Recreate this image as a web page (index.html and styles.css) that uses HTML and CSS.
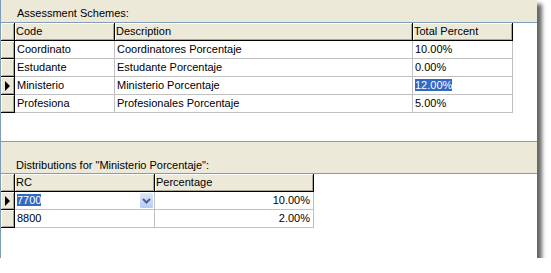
FILE: index.html
```html
<!DOCTYPE html>
<html lang="en">
<head>
  <meta charset="UTF-8">
  <meta name="viewport" content="width=device-width, initial-scale=1.0">
  <title>Assessment Schemes</title>
  <link rel="stylesheet" href="styles.css">
</head>
<body>
  <div class="window">
    <div class="band first"><span>Assessment Schemes:</span></div>
    <div class="grid-area schemes">
      <table class="grid">
        <colgroup>
          <col class="c-sel">
          <col class="c-code">
          <col class="c-desc">
          <col class="c-total">
        </colgroup>
        <tr>
          <th class="sel"></th>
          <th>Code</th>
          <th>Description</th>
          <th>Total Percent</th>
        </tr>
        <tr>
          <td class="sel"></td>
          <td>Coordinato</td>
          <td>Coordinatores Porcentaje</td>
          <td>10.00%</td>
        </tr>
        <tr>
          <td class="sel"></td>
          <td>Estudante</td>
          <td>Estudante Porcentaje</td>
          <td>0.00%</td>
        </tr>
        <tr>
          <td class="sel current"><span class="arrow"></span></td>
          <td>Ministerio</td>
          <td>Ministerio Porcentaje</td>
          <td><span class="picked">12.00%</span></td>
        </tr>
        <tr>
          <td class="sel"></td>
          <td>Profesiona</td>
          <td>Profesionales Porcentaje</td>
          <td>5.00%</td>
        </tr>
      </table>
    </div>
    <div class="band second"><span>Distributions for "Ministerio Porcentaje":</span></div>
    <div class="grid-area dists">
      <table class="grid">
        <colgroup>
          <col class="c-sel">
          <col class="c-rc">
          <col class="c-pct">
        </colgroup>
        <tr>
          <th class="sel"></th>
          <th>RC</th>
          <th>Percentage</th>
        </tr>
        <tr>
          <td class="sel current"><span class="arrow"></span></td>
          <td class="combo">
            <span class="picked">7700</span>
            <span class="drop">
              <svg width="9" height="6" viewBox="0 0 9 6"><path d="M1 1 L4.5 4.5 L8 1" fill="none" stroke="#4d6185" stroke-width="2"/></svg>
            </span>
          </td>
          <td class="num">10.00%</td>
        </tr>
        <tr>
          <td class="sel"></td>
          <td>8800</td>
          <td class="num">2.00%</td>
        </tr>
      </table>
    </div>
  </div>
</body>
</html>
```

FILE: styles.css
```css
body {
  margin: 0;
  background: #fff;
  font-family: "Liberation Sans", Arial, sans-serif;
  font-size: 11px;
  color: #000;
}
.window {
  width: 536px;
  height: 258px;
  background: #fff;
  border-left: 1px solid #7f9db9;
  box-shadow: 5px 4px 4px rgba(0, 0, 0, 0.6);
}
.band {
  display: flex;
  align-items: flex-end;
  background: #ece9d8;
  border-bottom: 1px solid #7f9db9;
  line-height: 13px;
}
.band.first {
  height: 23px;
  padding-left: 16px;
  box-sizing: border-box;
  padding-bottom: 2px;
}
.band.second {
  height: 33px;
  box-sizing: border-box;
  border-top: 1px solid #7f9db9;
  padding-left: 15px;
  padding-bottom: 1px;
}
.grid-area.schemes {
  height: 118px;
}
.grid-area.dists {
  height: 83px;
}
.grid {
  border-collapse: separate;
  border-spacing: 0;
  table-layout: fixed;
}
.c-sel { width: 14px; }
.c-code { width: 100px; }
.c-desc { width: 298px; }
.c-total { width: 100px; }
.c-rc { width: 140px; }
.c-pct { width: 159px; }
.grid td,
.grid th {
  height: 17px;
  padding: 0 2px;
  border-right: 1px solid #c0c0c0;
  border-bottom: 1px solid #c0c0c0;
  white-space: nowrap;
  overflow: hidden;
  text-align: left;
  font-weight: normal;
  line-height: 13px;
  vertical-align: middle;
}
.grid th {
  padding-left: 1px;
  background: #ece9d8;
  border-right-color: #000;
  border-bottom-color: #000;
  box-shadow: inset 1px 1px #fff, inset -1px -1px #aca899;
}
.grid .sel {
  padding: 0;
  background: #ece9d8;
  border-right-color: #000;
  border-bottom-color: #000;
  box-shadow: inset 1px 1px #fff, inset -1px -1px #aca899;
}
.arrow {
  display: block;
  width: 0;
  height: 0;
  margin-left: 4px;
  border-top: 5px solid transparent;
  border-bottom: 5px solid transparent;
  border-left: 5px solid #000;
}
.picked {
  background: #316ac5;
  color: #fff;
}
.combo {
  position: relative;
}
.drop {
  position: absolute;
  right: 1px;
  top: 1px;
  width: 13px;
  height: 15px;
  display: flex;
  align-items: center;
  justify-content: center;
  background: linear-gradient(#dce6fd, #b8cbf6);
  border-radius: 1px;
}
.grid td.num {
  text-align: right;
  padding-right: 3px;
}
```
